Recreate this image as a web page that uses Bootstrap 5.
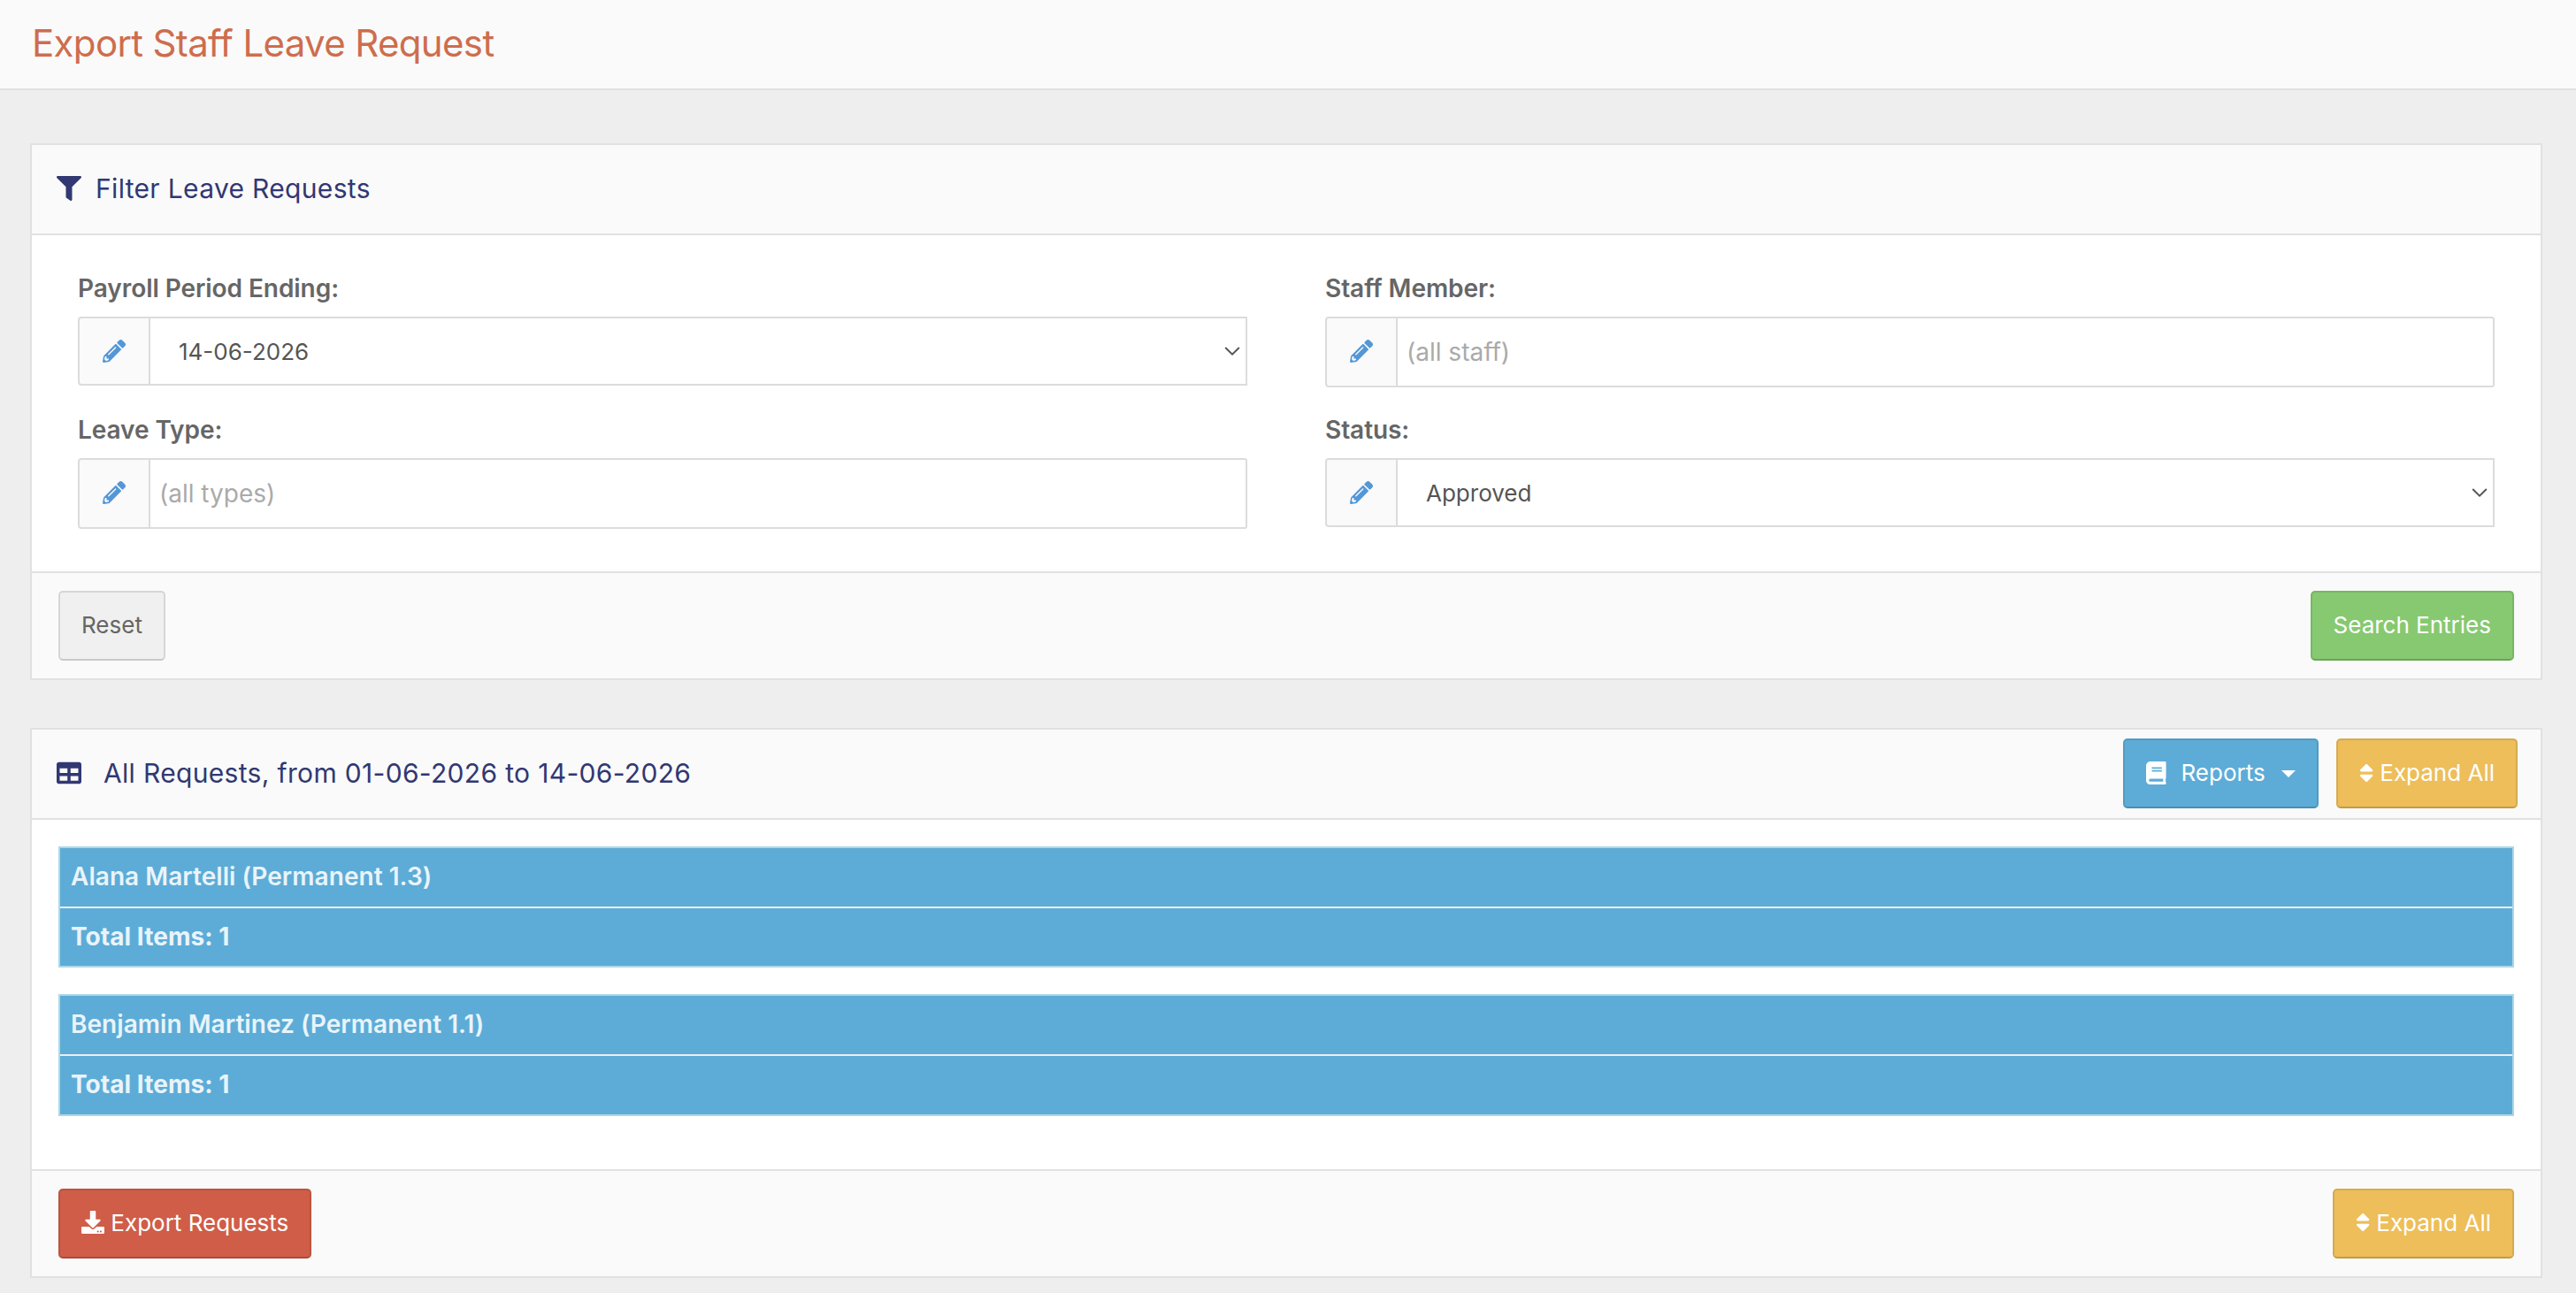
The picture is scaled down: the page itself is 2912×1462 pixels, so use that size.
<!DOCTYPE html>
<html lang="en">
<head>
  <meta charset="UTF-8">
  <meta name="viewport" content="width=device-width, initial-scale=1.0">
  <title>Export Staff Leave Request</title>
  <link href="https://cdn.jsdelivr.net/npm/bootstrap@5.3.0/dist/css/bootstrap.min.css" rel="stylesheet">
  <style>
    body {
      background-color: #eee;
      color: #666;
      font-family: Inter, sans-serif;
      font-size: 28px;
      overflow-x: hidden;
    }
    svg {
      fill: currentColor;
      flex: none;
    }
    .page-header {
      height: 102px;
      padding: 0 36px 1px;
      background-color: #fafafa;
      border-bottom: 2px solid #e0e0e0;
    }
    .page-header h1 {
      color: #ce6d4d;
      font-size: 42px;
      font-weight: 400;
      letter-spacing: -0.65px;
    }
    .page-content {
      padding: 60px 38px 0 34px;
    }
    .panel {
      border: 2px solid #e1e1e1;
      border-radius: 0 !important;
      margin-bottom: 54px;
    }
    .panel .card-header {
      height: 102px;
      padding: 0 26px 1px 28px;
      background-color: #fafafa;
      border-bottom: 2px solid #e1e1e1;
      border-radius: 0;
    }
    .panel .card-header h2 {
      color: #313872;
      font-size: 30px;
      font-weight: 400;
      letter-spacing: 0.33px;
      padding-bottom: 1px;
    }
    .filter-title { gap: 16px; }
    .requests-title { gap: 25px; }
    .header-tools { gap: 20px; }
    .filter-body {
      padding: 40px 52px 48px;
    }
    .filter-grid {
      --bs-gutter-x: 88px;
      --bs-gutter-y: 28px;
    }
    .form-label {
      display: block;
      font-weight: 600;
      letter-spacing: -0.06px;
      line-height: 40px;
      margin-bottom: 12px;
    }
    .input-group-text {
      width: 82px;
      padding: 0;
      background-color: #fafafa;
      border: 2px solid #dcdcdc;
      border-radius: 4px;
      color: #5397d7;
    }
    .input-group-text.for-input {
      padding-bottom: 2px;
    }
    .filter-body .form-control,
    .filter-body .form-select {
      border: 2px solid #dcdcdc;
      border-left: 0;
      margin-left: 0 !important;
      background-color: #fff;
    }
    .filter-body .form-control {
      height: 80px;
      padding: 0 10px;
      font-size: 28px;
      border-radius: 0 3px 3px 0;
    }
    .filter-body .form-control::placeholder {
      color: #aaa;
    }
    .filter-body .form-select {
      height: 78px;
      padding: 0 40px 0 32px;
      color: #555;
      font-size: 26px;
      border-radius: 0;
      background-image: url("data:image/svg+xml,%3Csvg xmlns='http://www.w3.org/2000/svg' viewBox='0 0 18 10'%3E%3Cpath d='M1.2 1 9 8.6 16.8 1' fill='none' stroke='%23555' stroke-width='2'/%3E%3C/svg%3E");
      background-size: 18px 10px;
      background-position: right 6px center;
    }
    .panel .card-footer {
      padding: 20px 30px;
      background-color: #fafafa;
      border-top: 2px solid #e1e1e1;
      border-radius: 0;
    }
    .panel .btn {
      display: flex;
      align-items: center;
      height: 79px;
      padding: 0 24px 2px;
      border-width: 2px;
      border-radius: 5px;
      font-size: 26px;
      white-space: pre;
      --bs-btn-color: #fff;
    }
    .btn-export { background-color: #cf5d48; border-color: #ba5441 #ba5441 #aa4b39; }
    .btn-search { background-color: #86c971; border-color: #79b566 #79b566 #6ea35d; }
    .btn-expand { background-color: #edbe59; border-color: #d5ab50 #d5ab50 #c29b49; }
    .btn-reports { background-color: #5dacd7; border-color: #549bc1 #549bc1 #4b8db0; }
    .panel .btn-reset {
      --bs-btn-color: #666;
      background-color: #f0f0f0;
      border-color: #d6d6d6 #d6d6d6 #c8c8c8;
    }
    .btn-reports .report-text { margin: 0 18px 0 17px; }
    .btn-reports::after {
      margin: 3px 0 0 !important;
      border-top: 8px solid !important;
      border-right: 8px solid transparent !important;
      border-left: 8px solid transparent !important;
    }
    .requests-body {
      padding: 30px 30px 60px;
    }
    .staff-group {
      border: 2px solid #add8e6;
      border-radius: 0;
    }
    .staff-group + .staff-group { margin-top: 30px; }
    .staff-group .list-group-item {
      height: 65.7px;
      padding: 0 12px;
      background-color: #5dacd7;
      border: 0;
      border-radius: 0;
      color: #e9f4fa;
      font-weight: 600;
      letter-spacing: 0.05px;
      line-height: 65px;
    }
    .staff-group .list-group-item + .list-group-item {
      height: 67.7px;
      border-top: 2px solid #eee;
      font-weight: 700;
    }
  </style>
</head>
<body>
  <!-- Shared icon shapes -->
  <svg class="d-none">
    <symbol id="icon-filter" viewBox="0 0 512 512"><path d="M487.976 0H24.028C2.71 0-8.047 25.866 7.058 40.971L192 225.941V432c0 7.831 3.821 15.17 10.237 19.662l80 55.98C298.02 518.69 320 507.493 320 487.98V225.941l184.947-184.97C520.021 25.896 509.338 0 487.976 0z"/></symbol>
    <symbol id="icon-table" viewBox="0 0 512 512"><path d="M464 32H48C21.49 32 0 53.49 0 80v352c0 26.51 21.49 48 48 48h416c26.51 0 48-21.49 48-48V80c0-26.51-21.49-48-48-48zM224 416H64v-96h160v96zm0-160H64v-96h160v96zm224 160H288v-96h160v96zm0-160H288v-96h160v96z"/></symbol>
    <symbol id="icon-pencil" viewBox="0 0 512 512"><path d="M497.9 142.1l-46.1 46.1c-4.7 4.7-12.3 4.7-17 0l-111-111c-4.7-4.7-4.7-12.3 0-17l46.1-46.1c18.7-18.7 49.1-18.7 67.9 0l60.1 60.1c18.8 18.7 18.8 49.1 0 67.9zM284.2 99.8L21.6 362.4.4 483.9c-2.9 16.4 11.4 30.6 27.8 27.8l121.5-21.3 262.6-262.6c4.7-4.7 4.7-12.3 0-17l-111-111c-4.8-4.7-12.4-4.7-17.1 0zM124.1 339.9c-5.5-5.5-5.5-14.3 0-19.8l154-154c5.5-5.5 14.3-5.5 19.8 0s5.5 14.3 0 19.8l-154 154c-5.5 5.5-14.3 5.5-19.8 0zM88 424h48v36.3l-64.5 11.3-31.1-31.1L51.7 376H88v48z"/></symbol>
    <symbol id="icon-book" viewBox="0 0 448 512"><path d="M448 360V24c0-13.3-10.7-24-24-24H96C43 0 0 43 0 96v320c0 53 43 96 96 96h328c13.3 0 24-10.7 24-24v-16c0-7.5-3.5-14.3-8.9-18.7-4.2-15.4-4.2-59.3 0-74.7 5.4-4.3 8.9-11.1 8.9-18.6zM128 134c0-3.3 2.7-6 6-6h212c3.3 0 6 2.7 6 6v20c0 3.3-2.7 6-6 6H134c-3.3 0-6-2.7-6-6v-20zm0 64c0-3.3 2.7-6 6-6h212c3.3 0 6 2.7 6 6v20c0 3.3-2.7 6-6 6H134c-3.3 0-6-2.7-6-6v-20zm253.4 250H96c-17.7 0-32-14.3-32-32 0-17.6 14.4-32 32-32h285.4c-1.9 17.1-1.9 46.9 0 64z"/></symbol>
    <symbol id="icon-sort" viewBox="0 0 320 512"><path d="M41 288h238c21.4 0 32.1 25.9 17 41L177 448c-9.4 9.4-24.6 9.4-33.9 0L24 329c-15.1-15.1-4.4-41 17-41zm255-105L177 64c-9.4-9.4-24.6-9.4-33.9 0L24 183c-15.1 15.1-4.4 41 17 41h238c21.4 0 32.1-25.9 17-41z"/></symbol>
    <symbol id="icon-download" viewBox="0 0 512 512"><path d="M216 0h80c13.3 0 24 10.7 24 24v168h87.7c17.8 0 26.7 21.5 14.1 34.1L269.7 378.3c-7.5 7.5-19.8 7.5-27.3 0L90.1 226.1c-12.6-12.6-3.7-34.1 14.1-34.1H192V24c0-13.3 10.7-24 24-24zm296 376v112c0 13.3-10.7 24-24 24H24c-13.3 0-24-10.7-24-24V376c0-13.3 10.7-24 24-24h146.7l49 49c20.1 20.1 52.5 20.1 72.6 0l49-49H488c13.3 0 24 10.7 24 24zm-124 88c0-11-9-20-20-20s-20 9-20 20 9 20 20 20 20-9 20-20zm64 0c0-11-9-20-20-20s-20 9-20 20 9 20 20 20 20-9 20-20z"/></symbol>
  </svg>

  <header class="page-header d-flex align-items-center">
    <h1 class="mb-0">Export Staff Leave Request</h1>
  </header>

  <main class="page-content">
    <form class="card panel">
      <div class="card-header d-flex align-items-center">
        <h2 class="filter-title d-flex align-items-center mb-0">
          <svg width="28" height="28"><use href="#icon-filter"/></svg>
          <span>Filter Leave Requests</span>
        </h2>
      </div>
      <div class="card-body filter-body">
        <div class="row filter-grid">
          <div class="col-6">
            <label for="payrollPeriod" class="form-label">Payroll Period Ending:</label>
            <div class="input-group">
              <span class="input-group-text justify-content-center"><svg width="26" height="26"><use href="#icon-pencil"/></svg></span>
              <select class="form-select" id="payrollPeriod">
                <option selected>14-06-2026</option>
              </select>
            </div>
          </div>
          <div class="col-6">
            <label for="staffMember" class="form-label">Staff Member:</label>
            <div class="input-group">
              <span class="input-group-text for-input justify-content-center"><svg width="26" height="26"><use href="#icon-pencil"/></svg></span>
              <input type="text" class="form-control" id="staffMember" placeholder="(all staff)">
            </div>
          </div>
          <div class="col-6">
            <label for="leaveType" class="form-label">Leave Type:</label>
            <div class="input-group">
              <span class="input-group-text for-input justify-content-center"><svg width="26" height="26"><use href="#icon-pencil"/></svg></span>
              <input type="text" class="form-control" id="leaveType" placeholder="(all types)">
            </div>
          </div>
          <div class="col-6">
            <label for="status" class="form-label">Status:</label>
            <div class="input-group">
              <span class="input-group-text justify-content-center"><svg width="26" height="26"><use href="#icon-pencil"/></svg></span>
              <select class="form-select" id="status">
                <option selected>Approved</option>
              </select>
            </div>
          </div>
        </div>
      </div>
      <div class="card-footer d-flex justify-content-between">
        <button type="reset" class="btn btn-reset">Reset</button>
        <button type="button" class="btn btn-search">Search Entries</button>
      </div>
    </form>

    <div class="card panel mb-0">
      <div class="card-header d-flex align-items-center justify-content-between">
        <h2 class="requests-title d-flex align-items-center mb-0">
          <svg width="28" height="28"><use href="#icon-table"/></svg>
          <span>All Requests, from 01-06-2026 to 14-06-2026</span>
        </h2>
        <div class="header-tools d-flex">
          <button type="button" class="btn btn-reports dropdown-toggle"><svg width="22.75" height="26"><use href="#icon-book"/></svg><span class="report-text">Reports</span></button>
          <button type="button" class="btn btn-expand"><svg width="16.25" height="26"><use href="#icon-sort"/></svg><span> Expand All</span></button>
        </div>
      </div>
      <div class="card-body requests-body">
        <div class="list-group staff-group">
          <div class="list-group-item">Alana Martelli (Permanent 1.3)</div>
          <div class="list-group-item">Total Items: 1</div>
        </div>
        <div class="list-group staff-group">
          <div class="list-group-item">Benjamin Martinez (Permanent 1.1)</div>
          <div class="list-group-item">Total Items: 1</div>
        </div>
      </div>
      <div class="card-footer d-flex justify-content-between">
        <button type="button" class="btn btn-export"><svg width="26" height="26"><use href="#icon-download"/></svg><span> Export Requests</span></button>
        <button type="button" class="btn btn-expand"><svg width="16.25" height="26"><use href="#icon-sort"/></svg><span> Expand All</span></button>
      </div>
    </div>
  </main>

  <script src="https://cdn.jsdelivr.net/npm/bootstrap@5.3.0/dist/js/bootstrap.bundle.min.js"></script>
</body>
</html>
